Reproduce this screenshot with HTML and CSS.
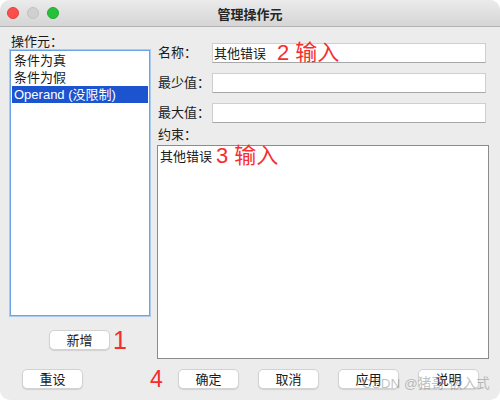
FILE: index.html
```html
<!DOCTYPE html>
<html lang="zh">
<head>
<meta charset="utf-8">
<link rel="stylesheet" href="styles.css">
</head>
<body>
<div class="window">
  <div class="titlebar">
    <div class="lights">
      <span class="light red"></span>
      <span class="light gray"></span>
      <span class="light green"></span>
    </div>
    <div class="title">管理操作元</div>
    <div></div>
  </div>
  <div class="content">
    <div class="left">
      <div class="label">操作元：</div>
      <div class="listbox">
        <div class="item">条件为真</div>
        <div class="item">条件为假</div>
        <div class="item selected">Operand (没限制)</div>
      </div>
      <div class="addrow">
        <button class="btn">新增</button>
        <span class="mark one">1</span>
      </div>
    </div>
    <div class="right">
      <div class="field-row first">
        <div class="flabel">名称：</div>
        <div class="input">其他错误<span class="mark inl">2 输入</span></div>
      </div>
      <div class="field-row">
        <div class="flabel">最少值：</div>
        <div class="input"></div>
      </div>
      <div class="field-row">
        <div class="flabel">最大值：</div>
        <div class="input"></div>
      </div>
      <div class="label cons">约束：</div>
      <div class="textarea">其他错误<span class="mark inl3">3 输入</span></div>
    </div>
  </div>
  <div class="bottom">
    <button class="btn">重设</button>
    <span class="mark four">4</span>
    <div class="btns">
      <button class="btn">确定</button>
      <button class="btn">取消</button>
      <button class="btn">应用</button>
      <button class="btn">说明</button>
    </div>
  </div>
  <div class="watermark">CSDN @猪哥-嵌入式</div>
</div>
</body>
</html>
```

FILE: styles.css
```css
* { box-sizing: border-box; }
html, body { margin: 0; padding: 0; background: #ffffff; }
body {
  font-family: "Liberation Sans", "Noto Sans CJK SC", sans-serif;
  font-size: 13px;
  color: #1a1a1a;
}
.window {
  position: relative;
  width: 500px;
  height: 400px;
  background: #ececec;
  border-radius: 10px;
  overflow: hidden;
}
.titlebar {
  height: 27px;
  display: grid;
  grid-template-columns: 1fr auto 1fr;
  align-items: center;
  background: linear-gradient(#ebebeb, #d5d5d5);
  border-bottom: 1px solid #b3b3b3;
}
.lights { display: flex; gap: 8px; padding-left: 7px; }
.light { width: 12px; height: 12px; border-radius: 50%; display: block; }
.red { background: #fd4e4a; border: 1px solid #e2403c; }
.gray { background: #d0d0d0; border: 1px solid #c0c0c0; }
.green { background: #27c03a; border: 1px solid #1fac30; }
.title {
  font-family: "Noto Sans CJK SC", sans-serif;
  font-weight: 700;
  font-size: 13px;
  color: #262626;
}
.content {
  display: flex;
  gap: 7px;
  height: 331px;
  padding-left: 10px;
}
.left { width: 140px; padding-top: 7px; }
.label { line-height: 16px; height: 16px; padding-left: 1px; }
.listbox {
  height: 266px;
  background: #fff;
  border: 1px solid #6aa3e6;
  box-shadow: 0 0 0 1px #a9caf1;
  padding: 1px 1px;
}
.item { height: 17px; line-height: 17px; padding-left: 2px; }
.item.selected { background: #1c53cf; color: #fff; }
.addrow {
  display: flex;
  align-items: center;
  gap: 3px;
  margin-top: 14px;
  padding-left: 39px;
}
.btn {
  font-family: "Noto Sans CJK SC", sans-serif;
  font-size: 13px;
  width: 61px;
  height: 20px;
  padding: 0;
  line-height: 18px;
  background: #ffffff;
  border: 1px solid #d2d2d2;
  border-radius: 5px;
  box-shadow: 0 1px 1px rgba(0,0,0,0.12);
  color: #1a1a1a;
}
.mark {
  color: #f62d2d;
  font-family: "Liberation Sans", "Noto Sans CJK SC", sans-serif;
  font-weight: 400;
}
.one { font-size: 25px; line-height: 20px; }
.right { width: 332px; padding-top: 16px; }
.field-row { display: flex; height: 20px; margin-bottom: 10px; }
.flabel { width: 55px; padding-left: 1px; line-height: 20px; }
.input {
  width: 274px;
  height: 20px;
  background: #fff;
  border: 1px solid #cfcfcf;
  border-bottom-color: #a7a7a7;
  line-height: 18px;
  padding-left: 1px;
  white-space: nowrap;
}
.inl { font-size: 22px; margin-left: 11px; vertical-align: -2px; line-height: 18px; }
.cons { margin-top: -6px; margin-bottom: 2px; padding-left: 1px; }
.textarea {
  height: 214px;
  background: #fff;
  border: 1.5px solid #8c8c8c;
  padding: 1px 2px;
  line-height: 18px;
  white-space: nowrap;
}
.inl3 { font-size: 22px; margin-left: 4px; vertical-align: -2px; }
.bottom {
  display: flex;
  align-items: center;
  height: 20px;
  margin-top: 11px;
  padding-left: 22px;
}
.four { font-size: 23px; line-height: 20px; margin-left: 67px; width: 14px; margin-right: 14px; }
.btns { display: flex; gap: 19px; }
.watermark {
  position: absolute;
  left: 362px;
  top: 372px;
  font-family: "Liberation Sans", "Noto Sans CJK SC", sans-serif;
  font-size: 13.5px;
  color: rgba(130,130,130,0.5);
  white-space: nowrap;
}
```
